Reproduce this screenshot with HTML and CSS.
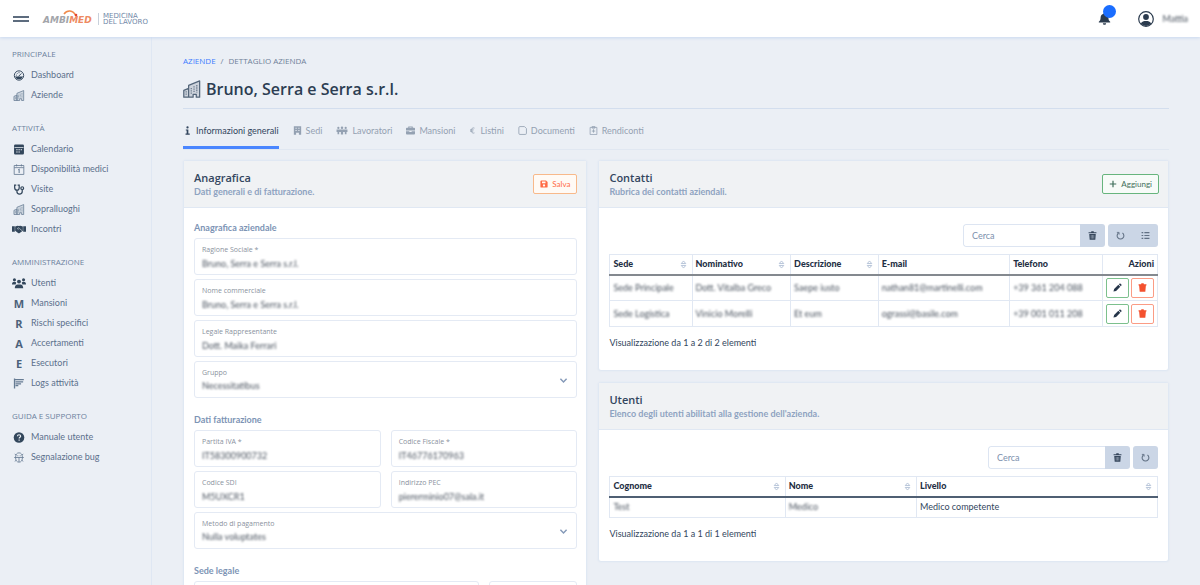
FILE: index.html
```html
<!DOCTYPE html>
<html lang="it">
<head>
<meta charset="utf-8">
<title>Bruno, Serra e Serra s.r.l.</title>
<link rel="stylesheet" href="styles.css">
</head>
<body>
<svg class="defs" aria-hidden="true">
  <symbol id="gauge" viewBox="0 0 16 16"><circle cx="8" cy="8" r="6.8" fill="none" stroke="currentColor" stroke-width="1.4"/><path d="M2 9.5h12a6.5 6.5 0 0 1-12 0z" fill="currentColor"/><path d="M7 9.5 11.5 5M3.5 7.5h1.3M5 4.5l.9.9M8 3.2v1.4" stroke="currentColor" stroke-width="1.4" fill="none"/></symbol>
  <symbol id="city" viewBox="0 0 16 16"><path d="M.7 15.3V9.2L5 7.5v7.8zM5 15.3V4.8L14.8.8v14.5h-3v-2.6H9v2.6z" fill="currentColor" fill-opacity=".2" stroke="currentColor" stroke-width="1.1" stroke-linejoin="round"/><path d="M7.3 7v5.5M9.8 5.5v5.5M12.3 4.5v6.5M2.8 10v4" stroke="currentColor" stroke-width=".9" stroke-dasharray="1.2 .8"/></symbol>
  <symbol id="calendar" viewBox="0 0 16 16"><path fill="currentColor" fill-rule="evenodd" d="M2.5.8h11a1.7 1.7 0 0 1 1.7 1.7v11a1.7 1.7 0 0 1-1.7 1.7h-11a1.7 1.7 0 0 1-1.7-1.7v-11A1.7 1.7 0 0 1 2.5.8zM1.5 4.2v1.3h13V4.2zM4 7.5V9h2V7.5zM7.2 7.5V9h2V7.5zM10.4 7.5V9h2V7.5zM4 11v1.5h2V11zM7.2 11v1.5h2V11z"/></symbol>
  <symbol id="caldate" viewBox="0 0 16 16"><path d="M1 2.2h14v13H1zM1 5.3h14M4.5.5v3M11.5.5v3" fill="none" stroke="currentColor" stroke-width="1.2"/><path d="m6.800 8.500 1.400-.8V13" fill="none" stroke="currentColor" stroke-width="1.500"/></symbol>
  <symbol id="steth" viewBox="0 0 16 16"><path d="M4 1.500H1.700V5c0 2.500 1.300 4 3.300 4s3.300-1.500 3.300-4V1.500H6M5 9v2c0 2.400 1.500 3.700 3.700 3.700s4-1.300 4-3.700V8.500" fill="none" stroke="currentColor" stroke-width="1.800"/><circle cx="12.700" cy="6" r="2" fill="none" stroke="currentColor" stroke-width="1.800"/></symbol>
  <symbol id="shake" viewBox="0 0 20 16"><path d="M0 4h4v8H0zM16 4h4v8h-4zM4.500 4.500 8 3.200l2 .6 2-.6 3.500 1.300v6l-4.500 3.200c-.7.500-1.500.500-2.300 0L4.500 10.500z" fill="currentColor"/><path d="m9.500 5.500-1.800 2c.8 1 2 .7 2.800-.3l4 3.300" fill="none" stroke="#ecf0f5" stroke-width=".8"/></symbol>
  <symbol id="users" viewBox="0 0 20 16"><g fill="currentColor"><circle cx="3.500" cy="3.300" r="2.200"/><circle cx="16.500" cy="3.300" r="2.200"/><circle cx="10" cy="6" r="2.800"/><path d="M0 10c0-2.500 1-3.800 3-3.800 1.400 0 2.500.6 3 1.500L5.200 10zM20 10c0-2.500-1-3.800-3-3.800-1.400 0-2.500.6-3 1.500l.8 2.300zM4 15.500c0-3.800 1.500-5.500 4-5.500h4c2.500 0 4 1.700 4 5.500z"/></g></symbol>
  <symbol id="logs" viewBox="0 0 16 16"><path d="M1.500.8v14.500M1 2.500h14M3 5.500h11M3 8.500h8M3 11h4" fill="none" stroke="currentColor" stroke-width="1.900"/></symbol>
  <symbol id="help" viewBox="0 0 16 16"><circle cx="8" cy="8" r="7.700" fill="currentColor"/><path d="M5.700 6.200C5.800 4.700 6.800 4 8 4c1.400 0 2.400.8 2.400 2 0 1.600-2.200 1.700-2.200 3.500M8.200 11v1.800" fill="none" stroke="#ecf0f5" stroke-width="1.700"/></symbol>
  <symbol id="bug" viewBox="0 0 16 16"><path d="M8 1.200c3.600 0 5 3.300 5 6.800s-1.400 6.800-5 6.800S3 11.500 3 8s1.400-6.800 5-6.800zM1 8h14M4 4.500 1.800 3M12 4.500 14.200 3M4 12l-2.200 1.500M12 12l2.200 1.500M8 8v6.500M5.500 5.500h1.500M9 5.500h1.500" fill="none" stroke="currentColor" stroke-width="1.200"/></symbol>
  <symbol id="info" viewBox="0 0 16 16"><circle cx="8" cy="2.500" r="2" fill="currentColor"/><path d="M5 6h4.500v7.500H12V15.500H4.500v-2h2V8H5z" fill="currentColor"/></symbol>
  <symbol id="building" viewBox="0 0 16 16"><path fill="currentColor" fill-rule="evenodd" d="M1.500.5h13v15H10.500v-3.500h-5v3.500H1.500zM4.500 3v1.800h2V3zM9.500 3v1.800h2V3zM4.500 7v1.800h2V7zM9.500 7v1.800h2V7z"/></symbol>
  <symbol id="workers" viewBox="0 0 20 16"><g fill="currentColor"><circle cx="3.500" cy="3.500" r="2"/><circle cx="10" cy="3" r="2.200"/><circle cx="16.500" cy="3.500" r="2"/><path d="M.3 6.300h19.400v4.200H18v4h-3v-4h-3V15H8v-4.500H5v4H2v-4H.3z"/></g></symbol>
  <symbol id="case" viewBox="0 0 16 16"><path d="M0 4.500A1.500 1.500 0 0 1 1.500 3H4V1h8v2h2.500A1.500 1.500 0 0 1 16 4.500V8H0zM6 2.200V3h4v-.8zM0 9.200h6v1.500h4V9.200h6v4.300a1.500 1.500 0 0 1-1.500 1.500h-13A1.500 1.500 0 0 1 0 13.500z" fill="currentColor" fill-rule="evenodd"/></symbol>
  <symbol id="euro" viewBox="0 0 16 16"><path d="M12.500 2.500C8.500.8 5 3.500 5 8s3.500 7.200 7.500 5.500M2.500 6.500h8M2.500 9.500h7" fill="none" stroke="currentColor" stroke-width="1.900"/></symbol>
  <symbol id="doc" viewBox="0 0 16 16"><path d="M3.500 1h8L15 4.500V13a2 2 0 0 1-2 2H3.500a2 2 0 0 1-2-2V3a2 2 0 0 1 2-2z" fill="none" stroke="currentColor" stroke-width="1.500"/></symbol>
  <symbol id="report" viewBox="0 0 16 16"><path d="M2 2.500h12v12.700H2zM5.500.8h5v3h-5z" fill="none" stroke="currentColor" stroke-width="1.400"/><path d="M8 5.800v6M5 9h6" stroke="currentColor" stroke-width="1.500"/></symbol>
  <symbol id="save" viewBox="0 0 16 16"><path fill="currentColor" fill-rule="evenodd" d="M2 .8h10l3.200 3.400v9.300a1.700 1.700 0 0 1-1.700 1.700h-11A1.700 1.700 0 0 1 .8 13.500v-11zM4 3v3.500h7V3zM8 8.500a2.300 2.300 0 1 0 .01 0z"/></symbol>
  <symbol id="plus" viewBox="0 0 16 16"><path d="M8 1.500v13M1.500 8h13" stroke="currentColor" stroke-width="2.400"/></symbol>
  <symbol id="trash" viewBox="0 0 16 16"><path d="M1 2h4.500L6 .6h4L10.500 2H15v2.200H1zM2.200 5.200h11.600L13 15.500H3z" fill="currentColor"/><path d="M5.700 7v6.500M8 7v6.500M10.300 7v6.500" stroke="#cbd6e6" stroke-width=".8"/></symbol>
  <symbol id="trashfull" viewBox="0 0 16 16"><path d="M1 2h4.500L6 .6h4L10.500 2H15v2.500h-1L13 15.500H3L2 4.500H1z" fill="currentColor"/></symbol>
  <symbol id="refresh" viewBox="0 0 16 16"><path d="M4.500 3.500A6 6 0 1 0 11.500 3.500" fill="none" stroke="currentColor" stroke-width="1.900"/><path d="M1.500 2.500h4v4" fill="none" stroke="currentColor" stroke-width="1.500"/></symbol>
  <symbol id="list" viewBox="0 0 16 16"><path d="M1 3h3M1 8h3M1 13h3M6 3h9M6 8h9M6 13h9" stroke="currentColor" stroke-width="2.200"/></symbol>
  <symbol id="pencil" viewBox="0 0 16 16"><path d="M.8 15.200 2 10.500l7.500-7.300 3.400 3.400-7.400 7.500zM10.500 2.200l1-1c.6-.6 1.300-.6 1.900 0l1.500 1.500c.6.600.6 1.300 0 1.900l-1 1z" fill="currentColor"/></symbol>
  <symbol id="sort" viewBox="0 0 10 14"><path d="M1.500 5.500 5 1.500l3.500 4zM1.500 8.500 5 12.500l3.500-4z" fill="none" stroke="currentColor" stroke-width="1.300"/></symbol>
  <symbol id="chev" viewBox="0 0 16 16"><path d="m2.500 5 5.500 5.500L13.500 5" fill="none" stroke="currentColor" stroke-width="2.600"/></symbol>
  <symbol id="bell" viewBox="0 0 16 16"><path d="M8 .5c.7 0 1 .4 1 1v.6c2.300.5 3.800 2.300 3.800 4.700 0 3 .8 4.200 2.200 5.200v1H1v-1c1.400-1 2.200-2.200 2.200-5.200 0-2.400 1.500-4.200 3.800-4.700v-.6c0-.6.300-1 1-1zM6 13.700h4c0 1.100-.9 2-2 2s-2-.9-2-2z" fill="currentColor"/></symbol>
  <symbol id="person" viewBox="0 0 16 16"><circle cx="8" cy="8" r="7.300" fill="none" stroke="currentColor" stroke-width="1.200"/><circle cx="8" cy="6" r="2.900" fill="currentColor"/><path d="M2.800 12.500C4 10.400 5.700 10 8 10s4 .4 5.200 2.500A7 7 0 0 1 8 15a7 7 0 0 1-5.200-2.500z" fill="currentColor"/></symbol>
</svg>

<header class="topbar">
  <button class="menu" aria-label="Menu"><span></span></button>
  <a class="brand" href="#" aria-label="Ambimed Medicina del lavoro">
    <span class="brand-name"><span class="brand-grey">AMBI</span><span class="brand-red">MED</span>
      <svg class="brand-arc" viewBox="0 0 16 8"><path d="M1 4C4 0 10-.5 13 6" fill="none" stroke="#f08a4b" stroke-width="1.500"/><circle cx="13" cy="5" r="1.300" fill="#e3452f"/></svg>
    </span>
    <span class="brand-sub">MEDICINA<br>DEL LAVORO</span>
  </a>
  <button class="bell" aria-label="Notifiche"><svg><use href="#bell"/></svg><span class="dot"></span></button>
  <button class="user"><svg><use href="#person"/></svg><span class="masked">Mattia</span></button>
</header>

<div class="shell">
  <nav class="sidebar">
    <section><h2>PRINCIPALE</h2>
      <a href="#"><svg><use href="#gauge"/></svg>Dashboard</a>
      <a href="#"><svg class="soft"><use href="#city"/></svg>Aziende</a>
    </section>
    <section><h2>ATTIVITÀ</h2>
      <a href="#"><svg><use href="#calendar"/></svg>Calendario</a>
      <a href="#"><svg class="soft"><use href="#caldate"/></svg>Disponibilità medici</a>
      <a href="#"><svg><use href="#steth"/></svg>Visite</a>
      <a href="#"><svg class="soft"><use href="#city"/></svg>Sopralluoghi</a>
      <a href="#"><svg class="wide"><use href="#shake"/></svg>Incontri</a>
    </section>
    <section><h2>AMMINISTRAZIONE</h2>
      <a href="#"><svg class="wide"><use href="#users"/></svg>Utenti</a>
      <a href="#"><b>M</b>Mansioni</a>
      <a href="#"><b>R</b>Rischi specifici</a>
      <a href="#"><b>A</b>Accertamenti</a>
      <a href="#"><b>E</b>Esecutori</a>
      <a href="#"><svg class="soft"><use href="#logs"/></svg>Logs attività</a>
    </section>
    <section><h2>GUIDA E SUPPORTO</h2>
      <a href="#"><svg><use href="#help"/></svg>Manuale utente</a>
      <a href="#"><svg class="soft"><use href="#bug"/></svg>Segnalazione bug</a>
    </section>
  </nav>

  <main class="main">
    <div class="crumbs"><a href="#">AZIENDE</a><span>/</span><span>DETTAGLIO AZIENDA</span></div>
    <h1><svg><use href="#city"/></svg>Bruno, Serra e Serra s.r.l.</h1>
    <nav class="tabs">
      <a class="active" href="#"><svg><use href="#info"/></svg>Informazioni generali</a>
      <a href="#"><svg><use href="#building"/></svg>Sedi</a>
      <a href="#"><svg class="wide"><use href="#workers"/></svg>Lavoratori</a>
      <a href="#"><svg><use href="#case"/></svg>Mansioni</a>
      <a href="#"><svg class="thin"><use href="#euro"/></svg>Listini</a>
      <a href="#"><svg><use href="#doc"/></svg>Documenti</a>
      <a href="#"><svg><use href="#report"/></svg>Rendiconti</a>
    </nav>

    <div class="columns">
      <section class="card registry">
        <header><div><h3>Anagrafica</h3><p>Dati generali e di fatturazione.</p></div>
          <button class="btn orange"><svg><use href="#save"/></svg>Salva</button></header>
        <form class="form">
          <h4>Anagrafica aziendale</h4>
          <div class="field"><label for="rs">Ragione Sociale *</label><input id="rs" value="Bruno, Serra e Serra s.r.l."></div>
          <div class="field"><label for="nc">Nome commerciale</label><input id="nc" value="Bruno, Serra e Serra s.r.l."></div>
          <div class="field"><label for="lr">Legale Rappresentante</label><input id="lr" value="Dott. Maika Ferrari"></div>
          <div class="field"><label for="gr">Gruppo</label><select id="gr"><option>Necessitatibus</option></select><svg><use href="#chev"/></svg></div>
          <h4>Dati fatturazione</h4>
          <div class="field half"><label for="pi">Partita IVA *</label><input id="pi" value="IT58300900732"></div>
          <div class="field half"><label for="cf">Codice Fiscale *</label><input id="cf" value="IT46776170963"></div>
          <div class="field half"><label for="sdi">Codice SDI</label><input id="sdi" value="M5UXCR1"></div>
          <div class="field half"><label for="pec">Indirizzo PEC</label><input id="pec" value="piererminio07@sala.it"></div>
          <div class="field"><label for="mp">Metodo di pagamento</label><select id="mp"><option>Nulla voluptates</option></select><svg><use href="#chev"/></svg></div>
          <h4>Sede legale</h4>
          <div class="field address"><input aria-label="Via"></div>
          <div class="field civic"><input aria-label="Civico"></div>
        </form>
      </section>

      <div class="stack">
        <section class="card">
          <header><div><h3>Contatti</h3><p>Rubrica dei contatti aziendali.</p></div>
            <button class="btn green"><svg><use href="#plus"/></svg>Aggiungi</button></header>
          <div class="body">
            <div class="tools">
              <div class="search"><input placeholder="Cerca" aria-label="Cerca contatti"><button aria-label="Cancella"><svg><use href="#trash"/></svg></button></div>
              <div class="group"><button aria-label="Aggiorna"><svg><use href="#refresh"/></svg></button><button aria-label="Colonne"><svg><use href="#list"/></svg></button></div>
            </div>
            <table class="contacts">
              <colgroup><col class="c15"><col class="c18"><col class="c16"><col class="c24"><col class="c17"><col class="c10"></colgroup>
              <thead><tr>
                <th><div>Sede<svg><use href="#sort"/></svg></div></th>
                <th><div>Nominativo<svg><use href="#sort"/></svg></div></th>
                <th><div>Descrizione<svg><use href="#sort"/></svg></div></th>
                <th>E-mail</th><th>Telefono</th><th class="right">Azioni</th></tr></thead>
              <tbody>
                <tr><td><span class="masked">Sede Principale</span></td><td><span class="masked">Dott. Vitalba Greco</span></td><td><span class="masked">Saepe iusto</span></td><td><span class="masked">nathan81@martinelli.com</span></td><td><span class="masked">+39 361 204 088</span></td>
                  <td><div class="actions"><button class="edit" aria-label="Modifica"><svg><use href="#pencil"/></svg></button><button class="del" aria-label="Elimina"><svg><use href="#trashfull"/></svg></button></div></td></tr>
                <tr><td><span class="masked">Sede Logistica</span></td><td><span class="masked">Vinicio Morelli</span></td><td><span class="masked">Et eum</span></td><td><span class="masked">ograssi@basile.com</span></td><td><span class="masked">+39 001 011 208</span></td>
                  <td><div class="actions"><button class="edit" aria-label="Modifica"><svg><use href="#pencil"/></svg></button><button class="del" aria-label="Elimina"><svg><use href="#trashfull"/></svg></button></div></td></tr>
              </tbody>
            </table>
            <p class="count">Visualizzazione da 1 a 2 di 2 elementi</p>
          </div>
        </section>

        <section class="card">
          <header><div><h3>Utenti</h3><p>Elenco degli utenti abilitati alla gestione dell'azienda.</p></div></header>
          <div class="body">
            <div class="tools">
              <div class="search"><input placeholder="Cerca" aria-label="Cerca utenti"><button aria-label="Cancella"><svg><use href="#trash"/></svg></button></div>
              <div class="group"><button aria-label="Aggiorna"><svg><use href="#refresh"/></svg></button></div>
            </div>
            <table class="people">
              <colgroup><col class="c32"><col class="c24"><col class="c44"></colgroup>
              <thead><tr>
                <th><div>Cognome<svg><use href="#sort"/></svg></div></th>
                <th><div>Nome<svg><use href="#sort"/></svg></div></th>
                <th><div>Livello<svg><use href="#sort"/></svg></div></th></tr></thead>
              <tbody><tr><td><span class="masked">Test</span></td><td><span class="masked">Medico</span></td><td>Medico competente</td></tr></tbody>
            </table>
            <p class="count">Visualizzazione da 1 a 1 di 1 elementi</p>
          </div>
        </section>
      </div>
    </div>
  </main>
</div>
</body>
</html>
```
FILE: styles.css
```css
* { box-sizing: border-box; }
html { scrollbar-width: none; }
body {
  margin: 0;
  background: #ebeff5;
  color: #33465e;
  font: 9px/12px "Lato", "Open Sans", sans-serif;
}
h1, h2, h3, h4, p { margin: 0; }
a { color: inherit; text-decoration: none; }
button, input, select { font: inherit; color: inherit; margin: 0; }
button { display: flex; align-items: center; justify-content: center; padding: 0; border: 0; background: none; cursor: pointer; }
svg { width: 10px; height: 10px; flex: none; display: block; }
.defs { position: absolute; width: 0; height: 0; }
.masked { display: inline-block; color: #4a535f; filter: blur(1px); }

/* Top bar */
.topbar {
  position: relative;
  display: flex;
  align-items: center;
  height: 37px;
  padding: 0 12px;
  background: #fff;
  box-shadow: 0 1px 3px #c9d8f0;
}
.menu { width: 17px; height: 12px; }
.menu span { width: 16px; height: 6px; border: solid #5d6c7e; border-width: 2px 0; }
.brand { display: flex; align-items: center; margin: 0 auto 0 14px; }
.brand-name { position: relative; font: italic 700 9px/10px "DejaVu Sans", sans-serif; padding-top: 3px; width: 55px; white-space: nowrap; }
.brand-grey { color: #a3a5aa; }
.brand-red { color: #ee8a62; }
.brand-arc { position: absolute; left: 20px; top: -2px; width: 16px; height: 8px; }
.brand-sub { border-left: 1px solid #c9d1dc; padding-left: 4px; color: #7288a8; font: 7px/6px "DejaVu Sans", sans-serif; }
.bell { position: relative; width: 16px; height: 16px; margin-right: 25px; color: #2b3b4e; }
.bell svg { width: 13px; height: 13px; }
.dot { position: absolute; left: 6px; top: -6px; width: 13px; height: 13px; border-radius: 50%; background: #1a6dff; }
.user { gap: 9px; color: #2b3b4e; }
.user svg { width: 16px; height: 16px; }

/* Frame */
.shell { display: flex; min-height: calc(100vh - 37px); }
.sidebar {
  flex: 0 0 152px;
  display: flex;
  flex-direction: column;
  gap: 12px;
  padding: 6px 12px;
  border-right: 1px solid #dfe7f3;
  color: #5b708c;
}
.sidebar h2 { font: 400 8px/22px "Open Sans", sans-serif; color: #6c819d; }
.sidebar a { display: flex; align-items: center; gap: 5px; height: 20px; }
.sidebar svg, .sidebar b { width: 14px; height: 11px; color: #33475c; }
.sidebar svg.wide { height: 12px; }
.sidebar svg.soft { color: #667b93; }
.sidebar b { font: 700 11px/11px "Open Sans", sans-serif; text-align: center; color: #4b617a; }
.main { flex: 1; min-width: 0; padding: 18px 31px 24px; }

/* Page heading */
.crumbs { display: flex; gap: 5px; font: 8px/12px "Open Sans", sans-serif; color: #6f8199; }
.crumbs a { color: #3d7bff; }
h1 {
  display: flex;
  align-items: center;
  gap: 5px;
  height: 42px;
  padding-top: 2px;
  border-bottom: 1px solid #d3deee;
  color: #2c3d52;
  font: 600 16px/24px "Open Sans", sans-serif;
}
h1 svg { width: 18px; height: 18px; color: #54667a; }
.tabs { display: flex; gap: 14px; height: 41px; margin-bottom: 10px; border-bottom: 1px solid #e0e7f1; color: #94a1b2; }
.tabs a { display: flex; align-items: center; gap: 4px; padding-top: 6px; border-bottom: 3px solid transparent; }
.tabs .active { color: #33465e; border-color: #4a86ff; }
.tabs svg { width: 9px; height: 9px; }
.tabs svg.wide { width: 12px; }
.tabs svg.thin { width: 7px; }

/* Cards */
.columns { display: grid; grid-template-columns: repeat(12, minmax(0, 1fr)); gap: 11px; }
.registry { grid-column: span 5; }
.stack { grid-column: span 7; display: flex; flex-direction: column; gap: 11px; }
.card { background: #fff; border: 1px solid #e0e8f3; border-radius: 3px; box-shadow: 0 0 2px #dde6f2; }
.card header {
  display: flex;
  align-items: center;
  justify-content: space-between;
  height: 47px;
  padding: 0 9px 0 10px;
  background: #f0f2f4;
  border-bottom: 1px solid #e0e8f3;
}
.card h3 { font: 600 11px/14px "Open Sans", sans-serif; }
.card header p { color: #8ea3c1; font-weight: 700; line-height: 13px; }
.btn { gap: 4px; height: 20px; padding: 0 6px; border: 1px solid; border-radius: 2px; font-size: 8px; }
.btn svg { width: 8px; height: 8px; }
.orange { color: #ff6b45; border-color: #f8b98a; background: #fffaf5; }
.green { color: #3f6f5a; border-color: #67b57d; background: #f7fbf8; }

/* Registry form */
.form { display: grid; grid-template-columns: repeat(12, minmax(0, 1fr)); column-gap: 10px; row-gap: 4px; padding: 13px 9px 10px 10px; }
.form h4 { grid-column: span 12; color: #7d94b5; font-size: 9px; font-weight: 700; line-height: 13px; }
.form h4:not(:first-child) { margin-top: 11px; }
.field { position: relative; grid-column: span 12; height: 37px; padding: 5px 7px; border: 1px solid #e4eaf4; border-radius: 3px; }
.field.half { grid-column: span 6; }
.field.address { grid-column: span 9; }
.field.civic { grid-column: span 3; }
.field label { display: block; color: #8a929e; font: 7px/12px "Open Sans", sans-serif; }
.field input, .field select {
  display: block;
  width: 100%;
  height: 14px;
  padding: 0;
  border: 0;
  outline: 0;
  appearance: none;
  background: none;
  color: #4a535f;
  filter: blur(1px);
}
.field svg { position: absolute; right: 8px; top: 14px; width: 9px; height: 9px; color: #8499b8; pointer-events: none; }

/* Tables */
.body { padding: 16px 10px 21px; }
.tools { display: flex; justify-content: flex-end; gap: 3px; margin-bottom: 7px; }
.search, .group { display: flex; border-radius: 3px; overflow: hidden; }
.search input { width: 117px; height: 23px; padding: 0 8px; border: 1px solid #dde5f2; border-right: 0; border-radius: 3px 0 0 3px; }
.search input::placeholder { color: #7d90ad; opacity: 1; }
.tools button { width: 25px; height: 23px; background: #cbd6e6; color: #35465b; }
.tools button svg { width: 9px; height: 9px; }
.group svg { opacity: .7; }
table { width: 100%; table-layout: fixed; border-collapse: collapse; }
th, td { padding: 0 3px; border: 1px solid #e1e8f3; text-align: left; white-space: nowrap; }
th { height: 20px; color: #1f2f44; font-weight: 900; }
th div { display: flex; align-items: center; justify-content: space-between; padding-right: 2px; }
th svg { width: 7px; height: 9px; color: #a9b9d1; }
th.right { text-align: right; }
.contacts td { height: 26px; }
.people td { height: 21px; }
.contacts thead { border-bottom: 2px solid #84898f; }
.people thead { border-bottom: 2px solid #4f5f73; }
.c10 { width: 10%; }
.c15 { width: 15%; }
.c16 { width: 16%; }
.c17 { width: 17%; }
.c18 { width: 18%; }
.c24 { width: 24%; }
.c32 { width: 32%; }
.c44 { width: 44%; }
.actions { display: flex; justify-content: flex-end; gap: 2px; }
.actions button { width: 24px; height: 20px; border: 1px solid; border-radius: 2px; }
.actions svg { width: 9px; height: 9px; }
.actions .edit { border-color: #7cc08d; }
.actions .edit svg { color: #26364a; }
.actions .del { border-color: #fb9c85; }
.actions .del svg { color: #f4512f; }
.count { margin-top: 9px; line-height: 13px; }
```
